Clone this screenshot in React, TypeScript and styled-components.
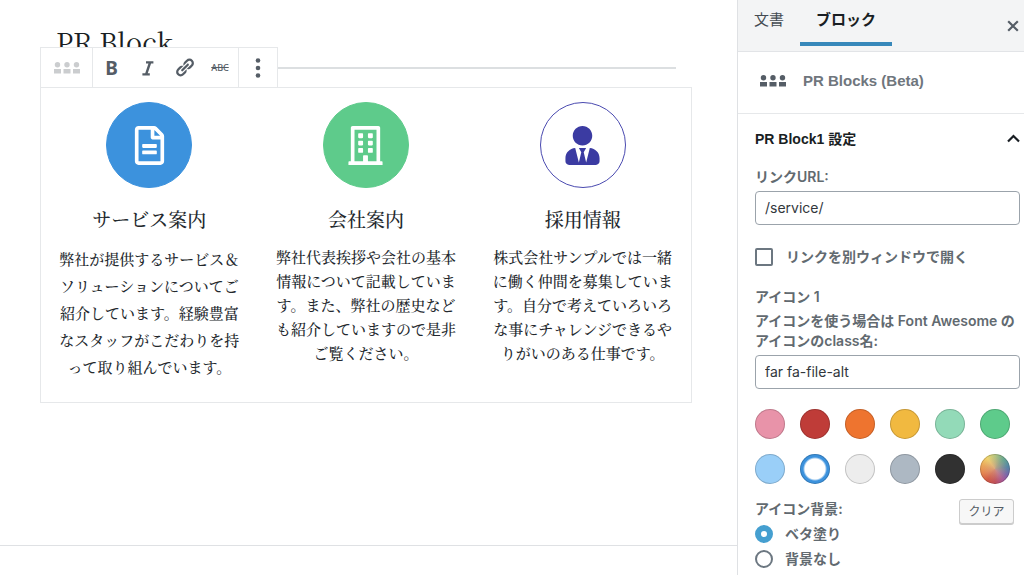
import React, { useState } from 'react';
import styled, { createGlobalStyle, css } from 'styled-components';
import { FaRegBuilding, FaRegFileAlt, FaUserTie } from 'react-icons/fa';

const serif = `"Noto Serif CJK JP", "Noto Serif JP", "Liberation Serif", "Noto Sans CJK JP", serif`;
const sans = `Inter, "Noto Sans CJK JP", sans-serif`;
const helvetica = `"Liberation Sans", "Noto Sans CJK JP", sans-serif`;
const line = '#e6e8ea';
const slate = '#555d66';

const GlobalStyle = createGlobalStyle`
  *, *::before, *::after { box-sizing: border-box; }
  body { margin: 0; background: #fff; color: #23282d; font-family: ${sans}; }
  button, input { font: inherit; margin: 0; }
  h1, h2, h3, p, fieldset { margin: 0; padding: 0; border: 0; min-width: 0; }
`;

const Page = styled.div`
  display: flex;
  min-height: 100vh;
`;

const Editor = styled.main`
  flex: 1;
  min-width: 0;
  display: flex;
  flex-direction: column;
`;

const Canvas = styled.div`
  flex: 1;
  padding: 22px 45px 0 40px;
`;

const TitleArea = styled.div`
  position: relative;
  height: 65px;
`;

const Title = styled.h1`
  padding-left: 16px;
  font: 400 27px/40px ${serif};
  color: #191e23;
`;

const Separator = styled.hr`
  margin: 5px 16px 0;
  border: 0;
  border-top: 2px solid #dcdfe1;
`;

const Toolbar = styled.div`
  position: absolute;
  left: 0;
  bottom: -1px;
  display: flex;
  height: 41px;
  background: #fff;
  border: 1px solid ${line};
`;

const ToolGroup = styled.div`
  display: flex;
  & + & { border-left: 1px solid ${line}; }
`;

const ToolButton = styled.button<{ $width?: number; $muted?: boolean }>`
  display: flex;
  align-items: center;
  justify-content: center;
  width: ${p => p.$width ?? 36}px;
  padding: 0;
  border: 0;
  background: none;
  color: ${p => (p.$muted ? '#cbcdcf' : slate)};
`;

const BoldMark = styled.b`
  font: 700 19px/20px "Noto Sans", sans-serif;
`;

const StrikeMark = styled.s`
  font: 500 9px/12px "Noto Sans", sans-serif;
`;

const Block = styled.section`
  display: grid;
  grid-template-columns: repeat(3, 1fr);
  border: 1px solid ${line};
  padding: 14px 0 22px;
`;

const Card = styled.article`
  display: flex;
  flex-direction: column;
  align-items: center;
  padding: 0 18px;
  text-align: center;
`;

const Badge = styled.div<{ $bg: string; $fg: string; $edge: string }>`
  display: flex;
  align-items: center;
  justify-content: center;
  width: 86px;
  height: 86px;
  border-radius: 50%;
  border: 1px solid ${p => p.$edge};
  background: ${p => p.$bg};
  color: ${p => p.$fg};
  font-size: 39px;
`;

const CardTitle = styled.h2`
  margin-top: 16px;
  font: 500 19px/30px ${serif};
`;

const CardText = styled.p<{ $loose?: boolean }>`
  margin-top: 11px;
  max-width: 181px;
  font: 500 15px/${p => (p.$loose ? 27 : 24)}px ${serif};
  line-break: loose;
`;

const MetaArea = styled.footer`
  height: 30px;
  border-top: 1px solid #dfe1e4;
`;

const Sidebar = styled.aside`
  flex: 0 0 287px;
  border-left: 1px solid #dfe1e4;
`;

const TabBar = styled.div`
  display: flex;
  height: 52px;
  background: #f3f4f5;
  border-bottom: 1px solid #e2e4e7;
`;

const Tab = styled.button<{ $active?: boolean }>`
  height: 46px;
  padding: 0 16px 6px;
  border: 0;
  background: none;
  font: ${p => (p.$active ? 700 : 400)} 15px/20px ${sans};
  color: ${p => (p.$active ? '#191e23' : '#444b52')};
  ${p => p.$active && css`
    padding-bottom: 2px;
    border-bottom: 4px solid #3788ba;
  `}
`;

const CloseButton = styled.button`
  display: flex;
  align-items: center;
  margin-left: auto;
  padding: 0 5px 0 0;
  border: 0;
  background: none;
  color: ${slate};
`;

const BlockInfo = styled.div`
  display: flex;
  align-items: center;
  gap: 17px;
  height: 62px;
  padding: 0 22px 4px;
  border-bottom: 1px solid ${line};
  color: ${slate};
`;

const BlockName = styled.h2`
  font: 700 15px/20px ${helvetica};
  color: #6f767d;
`;

const PanelToggle = styled.button`
  display: flex;
  align-items: center;
  justify-content: space-between;
  width: 100%;
  height: 49px;
  padding: 0 4px 0 17px;
  border: 0;
  background: none;
  font: 700 14px/20px ${helvetica};
  color: #191e23;
`;

const PanelBody = styled.div`
  padding: 4px 4px 6px 17px;
`;

const labelText = css`
  font: 600 14px/20px ${sans};
  color: #626a70;
`;

const Label = styled.label`
  display: block;
  margin-bottom: 4px;
  ${labelText}
`;

const SubHeading = styled.h3`
  margin: 20px 0 4px;
  ${labelText}
`;

const TextInput = styled.input`
  display: block;
  width: 100%;
  height: 34px;
  padding: 0 9px 2px;
  border: 1px solid #9ba3ab;
  border-radius: 4px;
  background: #fff;
  font: 400 14px/20px ${sans};
  color: #32373c;
`;

const CheckRow = styled.label<{ $gap: number }>`
  display: flex;
  align-items: center;
  gap: ${p => p.$gap}px;
  height: 20px;
  ${labelText}
`;

const LinkTarget = styled.div`
  margin-top: 22px;
`;

const Checkbox = styled.input`
  appearance: none;
  width: 18px;
  height: 18px;
  border: 2px solid #6c7781;
  border-radius: 2px;
  &:checked { background: #4aa0cf; }
`;

const Radio = styled.input`
  appearance: none;
  width: 18px;
  height: 18px;
  border: 2px solid #6c7781;
  border-radius: 50%;
  &:checked { border: 6px solid #459fd0; }
`;

const Swatches = styled.fieldset`
  display: grid;
  grid-template-columns: repeat(6, 30px);
  gap: 15px;
  margin: 20px 0 15px;
`;

const round = css`
  appearance: none;
  width: 30px;
  height: 30px;
  padding: 0;
  border: 0;
  border-radius: 50%;
  box-shadow: inset 0 0 0 1px rgba(0, 0, 0, 0.18);
`;

const Swatch = styled.input<{ $color: string }>`
  ${round}
  background: ${p => p.$color};
  &:checked {
    background: radial-gradient(circle, #fff 10px, ${p => p.$color} 12px);
  }
`;

const CustomSwatch = styled.button`
  ${round}
  background:
    radial-gradient(circle, rgba(215, 160, 130, 0.8), rgba(215, 160, 130, 0) 60%),
    conic-gradient(#b5c480, #6aa890 40deg, #5586a5 80deg, #7a68ab 115deg, #a85a98 145deg,
      #c0505a 180deg, #d25a45 215deg, #e58450 250deg, #eaa558 285deg, #efd46f 325deg, #b5c480);
`;

const BackgroundHead = styled.div`
  display: flex;
  justify-content: space-between;
  align-items: flex-start;
  padding-right: 6px;
`;

const ClearButton = styled.button`
  width: 55px;
  height: 25px;
  padding: 0;
  border: 1px solid #ccc;
  border-radius: 3px;
  background: #f7f7f7;
  box-shadow: 0 1px 0 #ccc;
  font: 400 12px/20px ${sans};
  color: ${slate};
`;

const RadioList = styled.div`
  display: grid;
  gap: 5px;
`;

const PeopleIcon = () => (
  <svg width="26" height="12" viewBox="0 0 26 12" fill="currentColor" aria-hidden="true">
    {[0, 9.5, 19].map(x => (
      <g key={x}>
        <circle cx={x + 3.5} cy="2.8" r="2.7" />
        <path d={`M${x} 7h7v4.5h-7z`} />
      </g>
    ))}
  </svg>
);

const ItalicIcon = () => (
  <svg width="20" height="20" viewBox="0 0 20 20" fill="none" stroke="currentColor" strokeWidth="2.4" aria-hidden="true">
    <path d="M8 4.4h7.4M4.4 16.4h7.4M12.1 4.5L8.1 16.3" />
  </svg>
);

const LinkIcon = () => (
  <svg width="21" height="21" viewBox="0 0 20 20" fill="currentColor" aria-hidden="true">
    <path d="M17.74 2.76c1.68 1.69 1.68 4.41 0 6.1l-1.53 1.52c-1.12 1.12-2.7 1.47-4.14 1.09l2.62-2.61.76-.77.76-.76c.84-.84.84-2.2 0-3.04-.84-.85-2.2-.85-3.04 0l-.77.76-3.38 3.38c-.37-1.44-.02-3.02 1.1-4.14l1.52-1.53c1.69-1.68 4.42-1.68 6.1 0zM8.59 13.43l5.34-5.34c.42-.42.42-1.1 0-1.52-.44-.43-1.13-.39-1.53 0l-5.33 5.34c-.42.42-.42 1.1 0 1.52.44.43 1.13.39 1.52 0zm-.76 2.29l4.14-4.15c.38 1.44.03 3.02-1.09 4.14l-1.52 1.53c-1.69 1.68-4.41 1.68-6.1 0-1.68-1.68-1.68-4.42 0-6.1l1.53-1.52c1.12-1.12 2.7-1.47 4.14-1.1l-4.14 4.15c-.85.84-.85 2.2 0 3.05.84.84 2.2.84 3.04 0z" />
  </svg>
);

const DotsIcon = () => (
  <svg width="6" height="20" viewBox="0 0 6 20" fill="currentColor" aria-hidden="true">
    <circle cx="3" cy="2.5" r="2.3" />
    <circle cx="3" cy="10" r="2.3" />
    <circle cx="3" cy="17.5" r="2.3" />
  </svg>
);

const CloseIcon = () => (
  <svg width="12" height="12" viewBox="0 0 12 12" stroke="currentColor" strokeWidth="2.2" aria-hidden="true">
    <path d="M1.2 1.2l9.6 9.6M10.8 1.2l-9.6 9.6" />
  </svg>
);

const ChevronUp = () => (
  <svg width="13" height="9" viewBox="0 0 13 9" fill="none" stroke="currentColor" strokeWidth="2.2" aria-hidden="true">
    <path d="M1 7.5l5.5-5.5L12 7.5" />
  </svg>
);

const cards = [
  {
    title: 'サービス案内',
    text: '弊社が提供するサービス＆ソリューションについてご紹介しています。経験豊富なスタッフがこだわりを持って取り組んでいます。',
    icon: <FaRegFileAlt />, bg: '#3c92dd', fg: '#fff', edge: '#3c92dd', loose: true,
  },
  {
    title: '会社案内',
    text: '弊社代表挨拶や会社の基本情報について記載しています。また、弊社の歴史なども紹介していますので是非ご覧ください。',
    icon: <FaRegBuilding />, bg: '#5ecb8b', fg: '#fff', edge: '#5ecb8b', loose: false,
  },
  {
    title: '採用情報',
    text: '株式会社サンプルでは一緒に働く仲間を募集しています。自分で考えていろいろな事にチャレンジできるやりがいのある仕事です。',
    icon: <FaUserTie />, bg: '#fff', fg: '#3b3ba2', edge: '#4a4ab0', loose: false,
  },
];

const colors = [
  ['#e893a9', 'ピンク'], ['#bf3c38', '赤'], ['#ee742f', 'オレンジ'], ['#f1b940', '黄'],
  ['#93dab8', '薄緑'], ['#5ecb8b', '緑'], ['#9acff8', '水色'], ['#3c92dd', '青'],
  ['#ededed', '薄灰'], ['#adb8c3', '灰'], ['#313131', '黒'],
];

export default function App() {
  const [color, setColor] = useState('#3c92dd');
  const [fill, setFill] = useState('solid');

  return (
    <Page lang="ja">
      <GlobalStyle />
      <Editor>
        <Canvas>
          <TitleArea>
            <Title>PR Block</Title>
            <Separator />
            <Toolbar role="toolbar">
              <ToolGroup>
                <ToolButton $width={51} $muted aria-label="ブロック"><PeopleIcon /></ToolButton>
              </ToolGroup>
              <ToolGroup>
                <ToolButton $width={37} aria-label="太字"><BoldMark>B</BoldMark></ToolButton>
                <ToolButton aria-label="イタリック"><ItalicIcon /></ToolButton>
                <ToolButton aria-label="リンク"><LinkIcon /></ToolButton>
                <ToolButton aria-label="打ち消し"><StrikeMark>ABC</StrikeMark></ToolButton>
              </ToolGroup>
              <ToolGroup>
                <ToolButton $width={38} aria-label="詳細設定"><DotsIcon /></ToolButton>
              </ToolGroup>
            </Toolbar>
          </TitleArea>
          <Block>
            {cards.map(c => (
              <Card key={c.title}>
                <Badge $bg={c.bg} $fg={c.fg} $edge={c.edge}>{c.icon}</Badge>
                <CardTitle>{c.title}</CardTitle>
                <CardText $loose={c.loose}>{c.text}</CardText>
              </Card>
            ))}
          </Block>
        </Canvas>
        <MetaArea />
      </Editor>

      <Sidebar>
        <TabBar>
          <Tab>文書</Tab>
          <Tab $active>ブロック</Tab>
          <CloseButton aria-label="閉じる"><CloseIcon /></CloseButton>
        </TabBar>
        <BlockInfo>
          <PeopleIcon />
          <BlockName>PR Blocks (Beta)</BlockName>
        </BlockInfo>
        <PanelToggle aria-expanded="true">PR Block1 設定<ChevronUp /></PanelToggle>
        <PanelBody>
          <Label htmlFor="url">リンクURL:</Label>
          <TextInput id="url" type="text" defaultValue="/service/" />
          <LinkTarget>
            <CheckRow $gap={13}>
              <Checkbox type="checkbox" />
              リンクを別ウィンドウで開く
            </CheckRow>
          </LinkTarget>
          <SubHeading>アイコン 1</SubHeading>
          <Label htmlFor="icon">アイコンを使う場合は Font Awesome のアイコンのclass名:</Label>
          <TextInput id="icon" type="text" defaultValue="far fa-file-alt" />
          <Swatches>
            {colors.map(([value, name]) => (
              <Swatch
                key={value}
                type="radio"
                name="color"
                aria-label={name}
                $color={value}
                checked={color === value}
                onChange={() => setColor(value)}
              />
            ))}
            <CustomSwatch type="button" aria-label="カスタムカラー" />
          </Swatches>
          <BackgroundHead>
            <Label as="span">アイコン背景:</Label>
            <ClearButton type="button">クリア</ClearButton>
          </BackgroundHead>
          <RadioList role="radiogroup" aria-label="アイコン背景">
            <CheckRow $gap={12}>
              <Radio type="radio" name="fill" checked={fill === 'solid'} onChange={() => setFill('solid')} />
              ベタ塗り
            </CheckRow>
            <CheckRow $gap={12}>
              <Radio type="radio" name="fill" checked={fill === 'none'} onChange={() => setFill('none')} />
              背景なし
            </CheckRow>
          </RadioList>
        </PanelBody>
      </Sidebar>
    </Page>
  );
}
